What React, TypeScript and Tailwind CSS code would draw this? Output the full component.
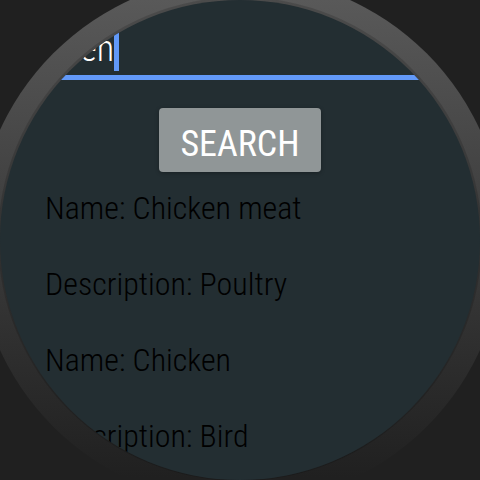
import { useState } from "react";

const results = [
  { name: "Chicken meat", description: "Poultry" },
  { name: "Chicken", description: "Bird" },
];

function SearchField() {
  const [query, setQuery] = useState("Chicken");
  return (
    <div className="flex h-20 w-full shrink-0 items-end border-b-[5px] border-[#6299f8]">
      <input
        aria-label="Search"
        value={query}
        onChange={(e) => setQuery(e.target.value)}
        className="mb-0.5 h-12 w-[114px] bg-transparent text-right text-[36px] leading-12 font-light text-white outline-none"
      />
      <span className="mb-1 h-12 w-[5px] bg-[#6299f8]" />
    </div>
  );
}

export default function App() {
  return (
    <main className="flex h-screen w-full items-center justify-center overflow-hidden bg-[#202020] font-['Roboto_Condensed','Roboto',sans-serif]">
      <div className="flex aspect-square w-[110vmin] shrink-0 items-center justify-center rounded-full bg-linear-to-b from-[#5c5c5c] to-[#202020] to-95%">
        <div className="flex aspect-square w-[100vmin] flex-col items-center overflow-hidden rounded-full bg-[#232e32] shadow-[0_-1px_0_2px_rgba(0,0,0,0.15)]">
          <SearchField />
          <button
            type="button"
            className="mt-7 h-16 shrink-0 rounded-sm bg-[#909697] px-[21px] pt-2 text-[36px] leading-14 text-white shadow-[0_1px_4px_rgba(0,0,0,0.3)]"
          >
            SEARCH
          </button>
          <div className="mt-[17px] w-full pl-[45px] text-[32px] leading-[38px] font-light whitespace-nowrap text-black">
            {results.map((r) => (
              <div key={r.name}>
                <p className="mb-[38px]">Name: {r.name}</p>
                <p className="mb-[38px]">Description: {r.description}</p>
              </div>
            ))}
          </div>
        </div>
      </div>
    </main>
  );
}
